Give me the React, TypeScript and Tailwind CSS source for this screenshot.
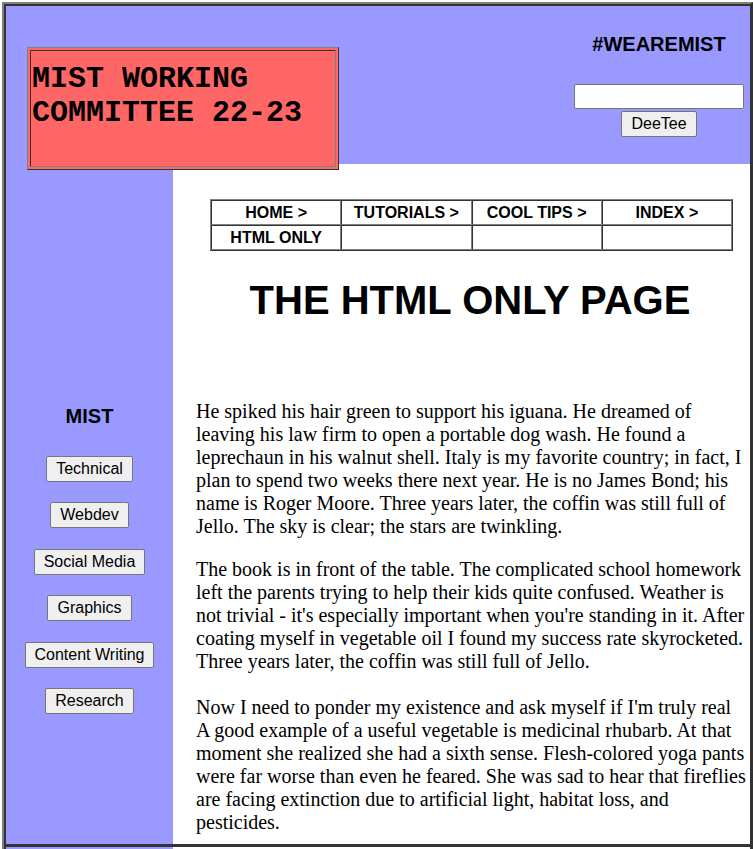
const crumbs = ['HOME >', 'TUTORIALS >', 'COOL TIPS >', 'INDEX >'];
const teams = ['Technical', 'Webdev', 'Social Media', 'Graphics', 'Content Writing', 'Research'];

// paragraph lines, broken where the original page breaks them
const paragraphs = [
  [
    'He spiked his hair green to support his iguana. He dreamed of',
    'leaving his law firm to open a portable dog wash. He found a',
    'leprechaun in his walnut shell. Italy is my favorite country; in fact, I',
    'plan to spend two weeks there next year. He is no James Bond; his',
    'name is Roger Moore. Three years later, the coffin was still full of',
    'Jello. The sky is clear; the stars are twinkling.',
  ],
  [
    'The book is in front of the table. The complicated school homework',
    'left the parents trying to help their kids quite confused. Weather is',
    "not trivial - it's especially important when you're standing in it. After",
    'coating myself in vegetable oil I found my success rate skyrocketed.',
    'Three years later, the coffin was still full of Jello.',
  ],
  [
    "Now I need to ponder my existence and ask myself if I'm truly real",
    'A good example of a useful vegetable is medicinal rhubarb. At that',
    'moment she realized she had a sixth sense. Flesh-colored yoga pants',
    'were far worse than even he feared. She was sad to hear that fireflies',
    'are facing extinction due to artificial light, habitat loss, and',
    'pesticides.',
  ],
];

const cell =
  'border border-t-[#333] border-l-[#333] border-b-[#808080] border-r-[#808080] h-[25px] p-0 text-center align-middle';

function Btn({ label, className = '' }: { label: string; className?: string }) {
  return (
    <button
      className={`h-[26px] rounded-[2px] border border-[#767676] bg-[#efefef] px-[9px] font-['Liberation_Sans',Arial,sans-serif] text-[16px] leading-[18px] text-black ${className}`}
    >
      {label}
    </button>
  );
}

export default function App() {
  return (
    <div className="h-[849px] w-[753px] overflow-hidden bg-white font-['Liberation_Serif','Times_New_Roman',serif] text-black">
      <div className="ml-[2px] mt-[2px] w-[751px] border-l-2 border-t-2 border-r-[3px] border-[#808080] border-r-[#333]">
        <div className="border-l-2 border-t-2 border-[#333]">
          {/* header */}
          <div className="flex h-[158px] items-start bg-[#9999ff]">
            <div className="relative z-10 ml-[21px] mt-[41px] h-[123px] w-[312px] shrink-0 border border-[#333] border-l-[#808080] border-t-[#808080] bg-[#ff6666] p-[2px]">
              <div className="h-full border border-[#808080] border-l-[#333] border-t-[#333] pl-[1px] pt-[11px] font-['Liberation_Mono','Courier_New',monospace] text-[30px] font-bold leading-[34px]">
                MIST WORKING
                <br />
                COMMITTEE 22-23
              </div>
            </div>
            <div className="ml-auto flex w-[182px] flex-col items-center pt-[27px]">
              <h3 className="font-['Liberation_Sans',Arial,sans-serif] text-[20px] font-bold leading-[23px]">#WEAREMIST</h3>
              <input className="mt-[28px] h-[25px] w-[170px] rounded-[2px] border border-[#767676] bg-white" />
              <Btn label="DeeTee" className="mt-[2px]" />
            </div>
          </div>

          {/* body */}
          <div className="flex h-[683px] border-b-[3px] border-[#333]">
            <aside className="flex w-[167px] shrink-0 flex-col items-center bg-[#9999ff] pt-[241px]">
              <h3 className="font-['Liberation_Sans',Arial,sans-serif] text-[20px] font-bold leading-[23px]">MIST</h3>
              <div className="mt-[28px] flex flex-col items-center gap-[20.4px]">
                {teams.map((t) => (
                  <Btn key={t} label={t} />
                ))}
              </div>
            </aside>

            <main className="flex-1 bg-white pl-[23px] pr-[2px]">
              <table className="ml-[14px] mt-[35px] w-[523px] table-fixed border-separate border-spacing-0 border border-[#333] border-l-[#808080] border-t-[#808080] font-['Liberation_Sans',Arial,sans-serif] text-[16px] font-bold leading-[18px]">
                <tbody>
                  <tr>
                    {crumbs.map((c) => (
                      <td key={c} className={cell}>
                        {c}
                      </td>
                    ))}
                  </tr>
                  <tr>
                    <td className={cell}>HTML ONLY</td>
                    <td className={cell} />
                    <td className={cell} />
                    <td className={cell} />
                  </tr>
                </tbody>
              </table>

              <h1 className="mt-[26px] pr-[4px] text-center font-['Liberation_Sans',Arial,sans-serif] text-[40px] font-bold leading-[46px]">
                THE HTML ONLY PAGE
              </h1>

              <div className="mt-[77px] flex flex-col gap-[20px] text-[20px] leading-[23px]">
                {paragraphs.map((lines, i) => (
                  <p key={i} className={i === 2 ? 'mt-[3px] whitespace-nowrap' : 'whitespace-nowrap'}>
                    {lines.map((l, j) => (
                      <span key={j}>
                        {l}
                        {j < lines.length - 1 && <br />}
                      </span>
                    ))}
                  </p>
                ))}
              </div>
            </main>
          </div>

          <div className="flex h-[20px]">
            <div className="w-[167px] bg-[#9999ff]" />
          </div>
        </div>
      </div>
    </div>
  );
}
